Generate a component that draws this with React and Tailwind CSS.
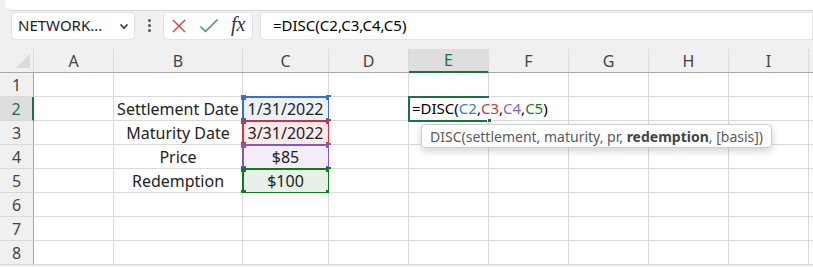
import React from "react";

const COLS = [
  { key: "A", w: "w-[80px]" },
  { key: "B", w: "w-[129px]" },
  { key: "C", w: "w-[86px]" },
  { key: "D", w: "w-[80px]" },
  { key: "E", w: "w-[80px]" },
  { key: "F", w: "w-[80px]" },
  { key: "G", w: "w-[80px]" },
  { key: "H", w: "w-[80px]" },
  { key: "I", w: "w-[80px]" },
  { key: "J", w: "w-[80px]" },
];

const RANGES = {
  2: { border: "border-[#3b6fcc]", fill: "bg-[#ecf2fb]", handle: "bg-[#3b6fcc]" },
  3: { border: "border-[#c8353f]", fill: "bg-[#fbeaea]", handle: "bg-[#c8353f]" },
  4: { border: "border-[#8159c0]", fill: "bg-[#f2eef9]", handle: "bg-[#8159c0]" },
  5: { border: "border-[#12791f]", fill: "bg-[#e7f1e8]", handle: "bg-[#12791f]" },
};

const DATA = {
  2: { B: "Settlement Date", C: "1/31/2022" },
  3: { B: "Maturity Date", C: "3/31/2022" },
  4: { B: "Price", C: "$85" },
  5: { B: "Redemption", C: "$100" },
};

const RangeBox = ({ r }) => (
  <div className={`absolute top-[-1px] bottom-[-2px] left-[-1px] right-[-2px] border-2 ${r.border} pointer-events-none`}>
    <span className={`absolute -left-[3px] -top-[3px] w-[5px] h-[5px] ${r.handle}`} />
    <span className={`absolute -right-[3px] -top-[3px] w-[5px] h-[5px] ${r.handle}`} />
    <span className={`absolute -left-[3px] -bottom-[3px] w-[5px] h-[5px] ${r.handle}`} />
    <span className={`absolute -right-[3px] -bottom-[3px] w-[5px] h-[5px] ${r.handle}`} />
  </div>
);

const Formula = () => (
  <span className="absolute left-[3px] top-0 h-full flex items-center whitespace-nowrap text-black text-[15px] z-20">
    =DISC(<span className="text-[#3b78d6]">C2</span>,<span className="text-[#d5343c]">C3</span>,
    <span className="text-[#8a63c6]">C4</span>,<span className="text-[#12802a]">C5</span>)
  </span>
);

export default function App() {
  const rows = [1, 2, 3, 4, 5, 6, 7, 8];

  return (
    <div className="w-[813px] h-[267px] overflow-hidden bg-[#f0f0f0] text-[#222] font-['Noto_Sans',sans-serif] relative">
      {/* top strip */}
      <div className="h-[11px] ml-[5px] bg-white rounded-bl-[6px] border-b border-[#d8d8d8]" />

      {/* formula bar */}
      <div className="flex items-center h-[29px] pl-[11px]">
        <div className="w-[124px] h-[28px] bg-white rounded-[4px] border border-[#e3e3e3] flex items-center justify-between pl-[6px] pr-[4px] text-[15px]">
          <span>NETWORK...</span>
          <svg width="12" height="12" viewBox="0 0 12 12" fill="none" stroke="#333" strokeWidth="1.6">
            <path d="M2.5 4.5 6 8 9.5 4.5" />
          </svg>
        </div>
        <div className="w-[28px] flex flex-col items-center gap-[2px]">
          <span className="w-[3px] h-[3px] bg-[#555] rounded-full" />
          <span className="w-[3px] h-[3px] bg-[#555] rounded-full" />
          <span className="w-[3px] h-[3px] bg-[#555] rounded-full" />
        </div>
        <div className="w-[90px] h-[28px] bg-white rounded-[4px] border border-[#e3e3e3] flex items-center pl-[7px] gap-[12px]">
          <svg width="16" height="16" viewBox="0 0 16 16" fill="none" stroke="#e0393e" strokeWidth="1.4">
            <path d="M2 2 14 14M14 2 2 14" />
          </svg>
          <svg width="20" height="16" viewBox="0 0 20 16" fill="none" stroke="#3d9a4c" strokeWidth="1.5">
            <path d="M1.5 8.5 6.5 13.5 18.5 1.5" />
          </svg>
          <span className="font-['Liberation_Serif',serif] italic text-[20px] leading-none text-[#333] -mt-[3px]">fx</span>
        </div>
        <div className="ml-[7px] flex-1 h-[28px] bg-white rounded-l-[4px] border border-[#e3e3e3] flex items-center pl-[12px] text-[15px] text-black">
          =DISC(C2,C3,C4,C5)
        </div>
      </div>
      <div className="h-[9px]" />

      {/* grid */}
      <div className="relative">
        {/* header row */}
        <div className="flex h-[24px] bg-[#f0f0f0] border-b border-[#a8a8a8]">
          <div className="w-[34px] shrink-0 border-r border-[#dadada] relative">
            <svg className="absolute right-[3px] bottom-[4px]" width="14" height="14" viewBox="0 0 14 14">
              <path d="M14 0V14H0Z" fill="#dadada" />
            </svg>
          </div>
          {COLS.map((c) => (
            <div
              key={c.key}
              className={`${c.w} shrink-0 flex items-center justify-center text-[16px] border-r border-[#dadada] ${
                c.key === "E" ? "bg-[#dedede] text-[#1e7145] border-b-2 border-b-[#1e7145] -mb-[1px]" : "text-[#444]"
              }`}
            >
              {c.key === "J" ? "" : c.key}
            </div>
          ))}
        </div>

        {rows.map((r) => (
          <div key={r} className="flex h-[24px]">
            <div
              className={`w-[34px] shrink-0 flex items-center justify-center text-[16px] border-b border-[#dadada] ${
                r === 2
                  ? "bg-[#dedede] text-[#1e7145] border-r-2 border-r-[#1e7145]"
                  : "bg-[#f0f0f0] text-[#444] border-r border-r-[#a8a8a8]"
              }`}
            >
              {r}
            </div>
            {COLS.map((c) => {
              const range = c.key === "C" ? RANGES[r] : null;
              const val = DATA[r]?.[c.key];
              const active = c.key === "E" && r === 2;
              return (
                <div
                  key={c.key}
                  className={`${c.w} shrink-0 relative border-b border-[#dadada] text-[16px] flex items-center justify-center whitespace-nowrap ${
                    active ? "border-r border-r-transparent z-10" : "border-r border-r-[#dadada]"
                  } ${range ? range.fill : "bg-white"}`}
                >
                  {val && <span className="relative z-10">{val}</span>}
                  {range && <RangeBox r={range} />}
                  {active && (
                    <>
                      <Formula />
                      <div className="absolute top-[-1px] bottom-[-2px] left-[-1px] right-[-1px] border-2 border-r-0 border-[#1e7145] z-10 pointer-events-none">
                        <span className="absolute -right-[3px] -bottom-[3px] w-[5px] h-[5px] bg-[#1e7145] border border-white" />
                      </div>
                    </>
                  )}
                </div>
              );
            })}
          </div>
        ))}

        {/* function tooltip */}
        <div className="absolute left-[421px] top-[75px] h-[24px] px-[8px] flex items-center bg-white border border-[#d0d0d0] rounded-[4px] shadow-[0_3px_8px_rgba(0,0,0,0.18)] text-[14px] text-[#5a5a5a] whitespace-nowrap z-30">
          DISC(settlement, maturity, pr,&nbsp;<span className="font-bold text-[#444]">redemption</span>, [basis])
        </div>
      </div>
    </div>
  );
}
